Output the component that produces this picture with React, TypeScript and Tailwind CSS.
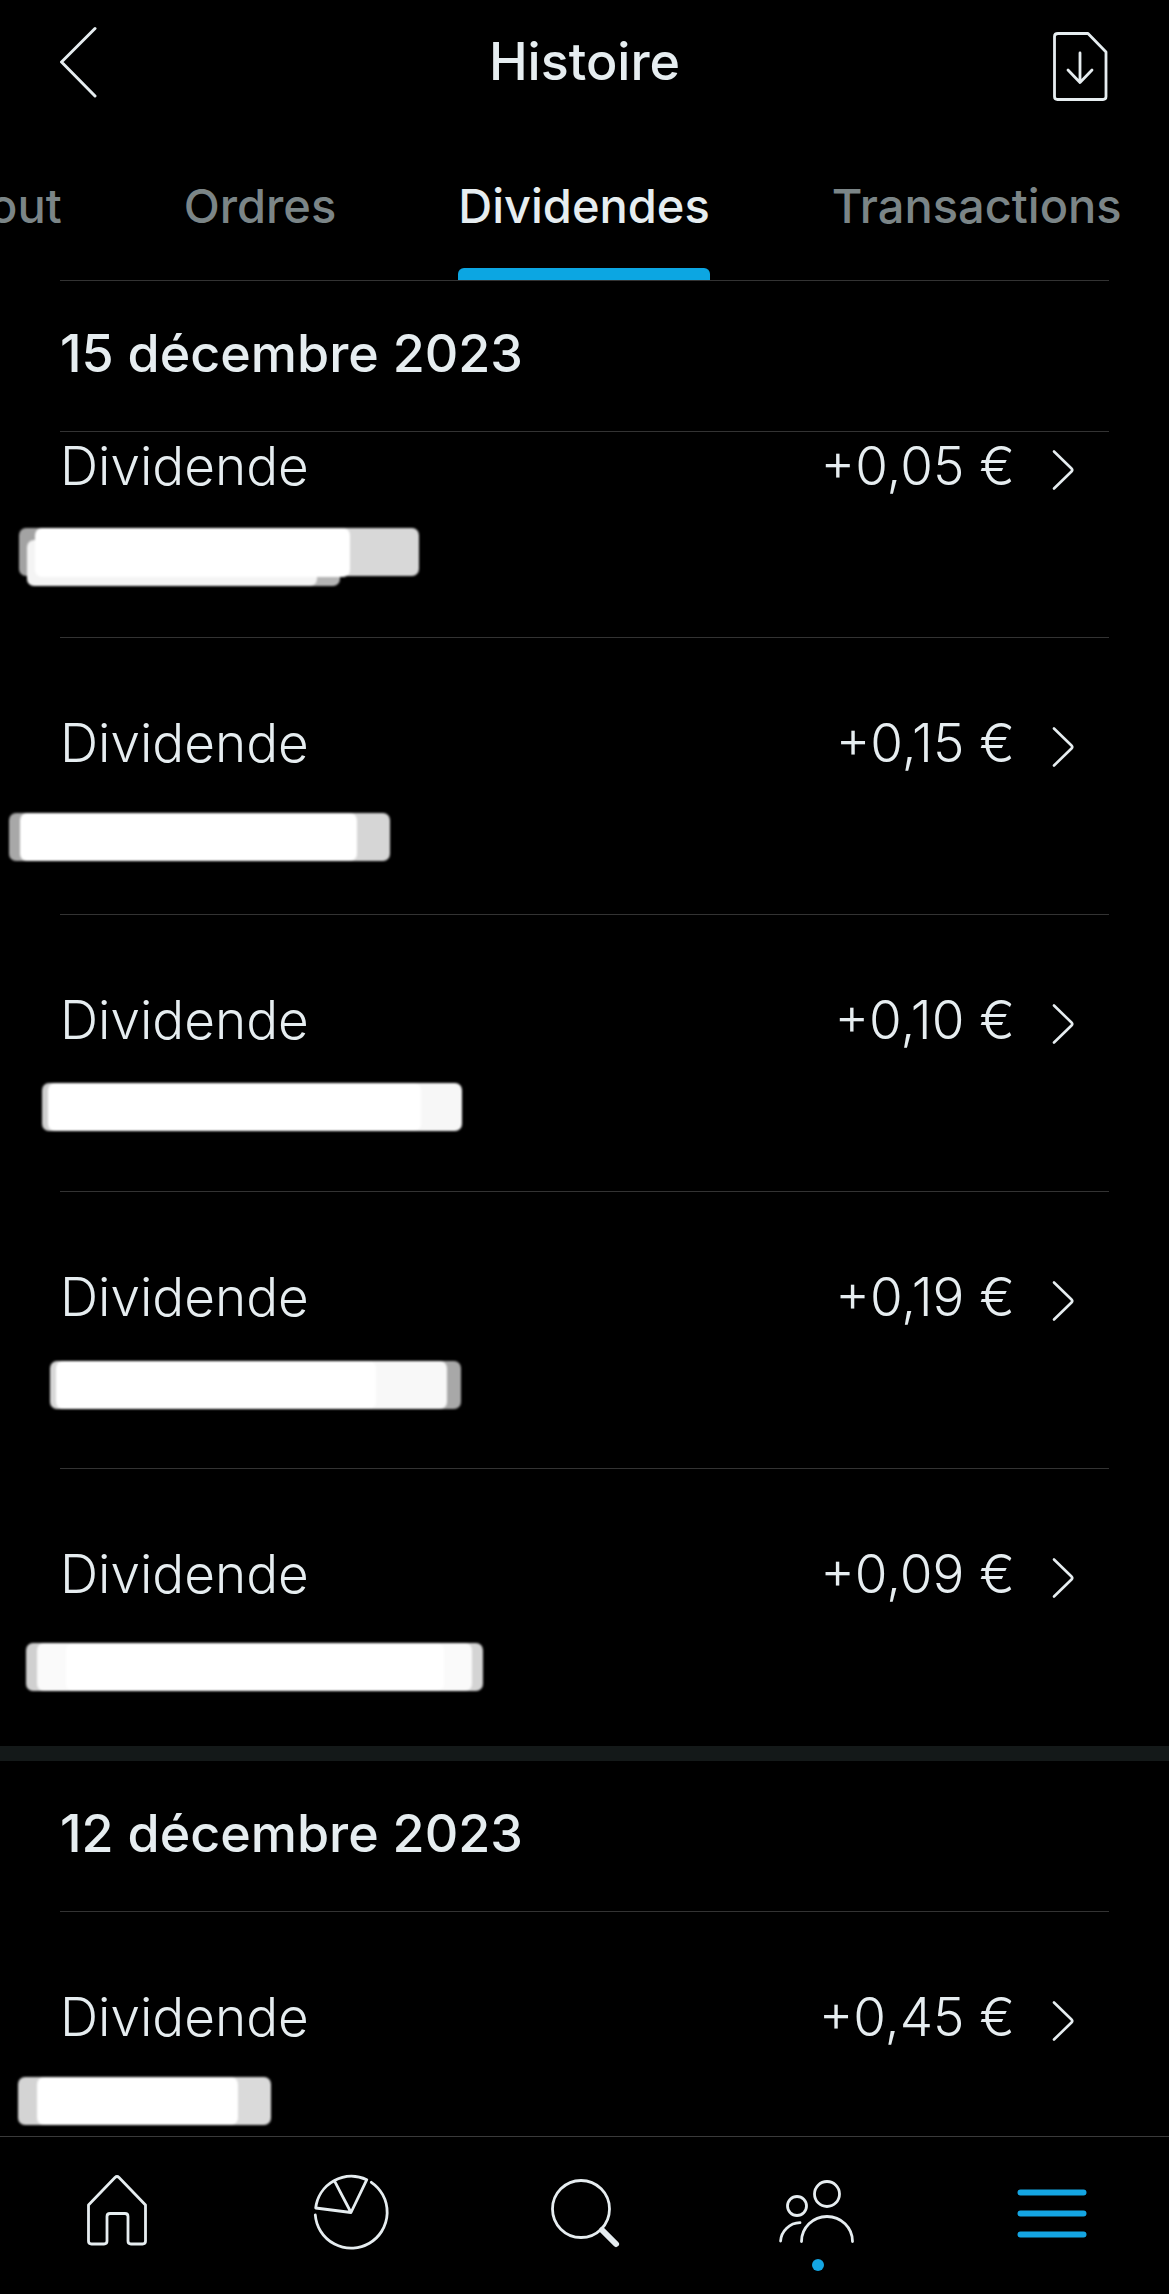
import type { ReactNode } from 'react';

interface Stroke {
  x: number;
  y: number;
  w: number;
  h: number;
  fill: string;
}

interface Entry {
  id: string;
  amount: string;
  strokes: Stroke[];
}

const tabs = ['Tout', 'Ordres', 'Dividendes', 'Transactions'];

// Masked company names, drawn as marker strokes under each title
const december15: Entry[] = [
  {
    id: 'a',
    amount: '+0,05 €',
    strokes: [
      { x: 19, y: 14, w: 60, h: 48, fill: '#a3a3a3' },
      { x: 300, y: 14, w: 119, h: 48, fill: '#d8d8d8' },
      { x: 280, y: 26, w: 60, h: 46, fill: '#b4b4b4' },
      { x: 27, y: 26, w: 290, h: 46, fill: '#f4f4f4' },
      { x: 35, y: 14, w: 315, h: 49, fill: '#ffffff' },
    ],
  },
  {
    id: 'b',
    amount: '+0,15 €',
    strokes: [
      { x: 9, y: 22, w: 60, h: 48, fill: '#a8a8a8' },
      { x: 300, y: 22, w: 90, h: 48, fill: '#d6d6d6' },
      { x: 20, y: 22, w: 337, h: 48, fill: '#ffffff' },
    ],
  },
  {
    id: 'c',
    amount: '+0,10 €',
    strokes: [
      { x: 42, y: 15, w: 60, h: 48, fill: '#d0d0d0' },
      { x: 300, y: 15, w: 162, h: 48, fill: '#f7f7f7' },
      { x: 48, y: 15, w: 373, h: 48, fill: '#ffffff' },
    ],
  },
  {
    id: 'd',
    amount: '+0,19 €',
    strokes: [
      { x: 50, y: 16, w: 60, h: 48, fill: '#d8d8d8' },
      { x: 380, y: 16, w: 81, h: 48, fill: '#a8a8a8' },
      { x: 300, y: 16, w: 147, h: 48, fill: '#f8f8f8' },
      { x: 56, y: 16, w: 320, h: 48, fill: '#ffffff' },
    ],
  },
  {
    id: 'e',
    amount: '+0,09 €',
    strokes: [
      { x: 26, y: 21, w: 60, h: 48, fill: '#d0d0d0' },
      { x: 400, y: 21, w: 83, h: 48, fill: '#d4d4d4' },
      { x: 37, y: 21, w: 435, h: 48, fill: '#fafafa' },
      { x: 66, y: 21, w: 378, h: 48, fill: '#ffffff' },
    ],
  },
];

const december12: Entry[] = [
  {
    id: 'f',
    amount: '+0,45 €',
    strokes: [
      { x: 18, y: 12, w: 60, h: 48, fill: '#d4d4d4' },
      { x: 200, y: 12, w: 71, h: 48, fill: '#dadada' },
      { x: 37, y: 12, w: 201, h: 48, fill: '#ffffff' },
    ],
  },
];

function MaskedName({ strokes }: { strokes: Stroke[] }) {
  return (
    <svg width="500" height="80" viewBox="0 0 500 80" className="mt-[14px] -ml-15 block blur-[1px]" aria-hidden="true">
      {strokes.map((s, i) => (
        <rect key={i} x={s.x} y={s.y} width={s.w} height={s.h} rx="7" fill={s.fill} />
      ))}
    </svg>
  );
}

function EntryRow({ entry, clipped }: { entry: Entry; clipped?: boolean }) {
  return (
    <li
      className={
        clipped
          ? 'border-b border-[#333333] pb-[43px]'
          : 'border-b border-[#333333] pt-[71px] pb-[43px] last:border-transparent'
      }
    >
      <button type="button" className="block w-full cursor-pointer text-left">
        <span className="flex items-center pr-[34px] text-[53px] leading-[68px] font-light">
          <span className="flex-1">Dividende</span>
          <span>{entry.amount}</span>
          <svg width="24" height="44" viewBox="0 0 24 44" fill="none" stroke="currentColor" strokeWidth="2.6" strokeLinecap="round" strokeLinejoin="round" className="mt-2 ml-9" aria-hidden="true">
            <path d="M3 3.500 L20.500 20.500 Q22 22 20.500 23.500 L3 40.500" />
          </svg>
        </span>
        <MaskedName strokes={entry.strokes} />
      </button>
    </li>
  );
}

function DayTitle({ children }: { children: ReactNode }) {
  return (
    <h2 className="mx-15 border-b border-[#333333] pt-9 pb-10 text-[52px] leading-[74px] font-medium">
      {children}
    </h2>
  );
}

function NavItem({ label, active, children }: { label: string; active?: boolean; children: ReactNode }) {
  return (
    <a href="#" aria-label={label} className={active ? 'flex justify-center text-[#14a5e2]' : 'flex justify-center'}>
      <svg width="80" height="112" viewBox="0 0 80 112" fill="none" stroke="currentColor" strokeWidth="2.8" strokeLinecap="round" strokeLinejoin="round">
        {children}
      </svg>
    </a>
  );
}

export default function App() {
  return (
    <div className="flex h-screen flex-col overflow-hidden bg-black font-['Inter','Liberation_Sans',sans-serif] text-[#e6edf0]">
      <header className="grid shrink-0 grid-cols-[1fr_auto_1fr] items-center px-15 pt-[22px]">
        <button type="button" aria-label="Retour" className="cursor-pointer justify-self-start">
          <svg width="40" height="76" viewBox="0 0 40 76" fill="none" stroke="currentColor" strokeWidth="3" strokeLinecap="round">
            <path d="M35 4.500 L1.500 38 L35 72" />
          </svg>
        </button>
        <h1 className="text-[52px] leading-[76px] font-medium">Histoire</h1>
        <button type="button" aria-label="Télécharger" className="cursor-pointer justify-self-end">
          <svg width="60" height="80" viewBox="0 0 60 80" fill="none" stroke="currentColor" strokeWidth="2.8" strokeLinecap="round" strokeLinejoin="round">
            <path d="M9 11.500 H39 L57 30 V74.500 Q57 77.500 54 77.500 H8.500 Q5.500 77.500 5.500 74.500 V14.500 Q5.500 11.500 9 11.500 Z" />
            <path d="M31 31 V60 M19 48 L31 60.500 L43 48" />
          </svg>
        </button>
      </header>

      <nav aria-label="Historique" className="shrink-0 overflow-hidden pt-14">
        {/* scrolled a little so that the first tab runs off the left edge */}
        <div className="-ml-[38px] flex items-start gap-[122px]">
          {tabs.map((tab) => (
            <button
              key={tab}
              type="button"
              className={
                tab === 'Dividendes'
                  ? 'shrink-0 cursor-pointer pt-3 text-[47px] leading-[72px] font-medium'
                  : 'shrink-0 cursor-pointer pt-3 text-[47px] leading-[72px] font-medium text-[#7b8587]'
              }
            >
              <span className="block pb-[26px]">{tab}</span>
              {tab === 'Dividendes' && <span className="block h-3 rounded-t-md bg-[#0ca6e2]" />}
            </button>
          ))}
        </div>
        <div className="mx-15 border-b border-[#333333]" />
      </nav>

      <main className="min-h-0 flex-1 overflow-hidden">
        <section>
          <DayTitle>15 décembre 2023</DayTitle>
          <ul className="px-15">
            {december15.map((entry, i) => (
              <EntryRow key={entry.id} entry={entry} clipped={i === 0} />
            ))}
          </ul>
        </section>
        <section className="border-t-[15px] border-[#141919]">
          <DayTitle>12 décembre 2023</DayTitle>
          <ul className="px-15">
            {december12.map((entry) => (
              <EntryRow key={entry.id} entry={entry} />
            ))}
          </ul>
        </section>
      </main>

      <nav aria-label="Navigation principale" className="grid shrink-0 grid-cols-5 border-t border-[#3a3a3a] pt-[22px] pb-[23px]">
        <NavItem label="Accueil">
          <path d="M38 18.500 Q40 16.500 42 18.500 L68.500 46 V82 Q68.500 85 65.500 85 H54 Q51 85 51 82 V57.500 Q51 54.500 48 54.500 H33 Q30 54.500 30 57.500 V82 Q30 85 27 85 H14.500 Q11.500 85 11.500 82 V46 Z" />
        </NavItem>
        <NavItem label="Portefeuille">
          <path d="M40 53.500 L4.700 49 A36 36 0 0 1 55.800 20.700 Z M40 53.500 L23.700 22.300" />
          <path d="M60.300 23.300 A36 36 0 1 1 4.300 56" />
        </NavItem>
        <NavItem label="Rechercher">
          <circle cx="37" cy="50" r="28.500" />
          <path d="M58 71 L72 85" strokeWidth="6" />
        </NavItem>
        <NavItem label="Communauté">
          <circle cx="49" cy="35" r="12.500" />
          <circle cx="19" cy="47" r="9.500" />
          <path d="M23.500 82.500 A25.500 25 0 0 1 74.500 82.500" />
          <path d="M2.600 82 A20 19.500 0 0 1 22 63.700" />
          <circle cx="40" cy="106" r="6" fill="#14a5e2" stroke="none" />
        </NavItem>
        <NavItem label="Menu" active>
          <path d="M8.500 33.500 H71.500 M8.500 54.500 H71.500 M8.500 75.500 H71.500" strokeWidth="6" />
        </NavItem>
      </nav>
    </div>
  );
}
